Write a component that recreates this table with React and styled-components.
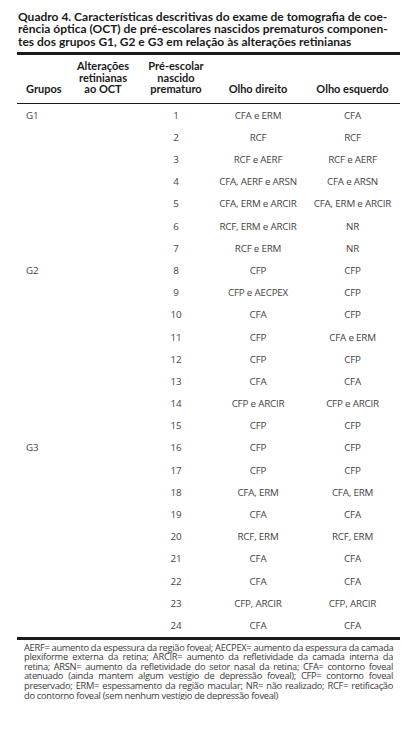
import React from 'react';
import styled, { createGlobalStyle } from 'styled-components';

const GlobalStyle = createGlobalStyle`
  html, body {
    margin: 0;
    padding: 0;
    background: #ffffff;
  }
`;

const Page = styled.div`
  width: 383px;
  padding: 10.75px 0 0 17px;
  color: #1a1a1a;
`;

const Title = styled.h1`
  margin: 0 0 4px 1px;
  font-family: Lato, "Liberation Sans", sans-serif;
  font-weight: 700;
  font-size: 12px;
  line-height: 12.5px;
  color: #1a1a1a;
  white-space: nowrap;
`;

const Rule = styled.div`
  height: ${(p) => p.$h || 3}px;
  background: #1a1a1a;
`;

const Grid = styled.div`
  display: grid;
  grid-template-columns: 48px 76px 70px 94px 95px;
`;

const HeadRow = styled(Grid)`
  padding: 5px 0 8px;
  align-items: end;
`;

const HeadCell = styled.div`
  font-family: Lato, "Liberation Sans", sans-serif;
  font-weight: 700;
  font-size: 11px;
  line-height: 11.5px;
  color: #1a1a1a;
  text-align: ${(p) => (p.$left ? 'left' : 'center')};
  padding-left: ${(p) => (p.$left ? '9px' : '0')};
  white-space: nowrap;
`;

const Row = styled(Grid)`
  height: 22.2px;
  align-items: center;
`;

const Cell = styled.div`
  font-family: "Open Sans", "Liberation Sans", sans-serif;
  font-size: 9.8px;
  line-height: 11px;
  color: #444444;
  text-align: ${(p) => (p.$left ? 'left' : 'center')};
  padding-left: ${(p) => (p.$left ? '9px' : '0')};
  white-space: nowrap;
  letter-spacing: -0.2px;
`;

const Notes = styled.div`
  padding: 3px 7px 0 7px;
  font-family: "Open Sans", "Liberation Sans", sans-serif;
  font-size: 9.3px;
  line-height: 9.6px;
  color: #3a3a3a;
  letter-spacing: -0.3px;
`;

const NoteLine = styled.span`
  display: block;
  white-space: nowrap;
  text-align: justify;
  text-align-last: ${(p) => (p.$last ? 'left' : 'justify')};
`;

const titleLines = [
  'Quadro 4. Características descritivas do exame de tomografia de coe-',
  'rência óptica (OCT) de pré-escolares nascidos prematuros componen-',
  'tes dos grupos G1, G2 e G3 em relação às alterações retinianas',
];

const rows = [
  ['G1', '1', 'CFA e ERM', 'CFA'],
  ['', '2', 'RCF', 'RCF'],
  ['', '3', 'RCF e AERF', 'RCF e AERF'],
  ['', '4', 'CFA, AERF e ARSN', 'CFA e ARSN'],
  ['', '5', 'CFA, ERM e ARCIR', 'CFA, ERM e ARCIR'],
  ['', '6', 'RCF, ERM e ARCIR', 'NR'],
  ['', '7', 'RCF e ERM', 'NR'],
  ['G2', '8', 'CFP', 'CFP'],
  ['', '9', 'CFP e AECPEX', 'CFP'],
  ['', '10', 'CFA', 'CFP'],
  ['', '11', 'CFP', 'CFA e ERM'],
  ['', '12', 'CFP', 'CFP'],
  ['', '13', 'CFA', 'CFA'],
  ['', '14', 'CFP e ARCIR', 'CFP e ARCIR'],
  ['', '15', 'CFP', 'CFP'],
  ['G3', '16', 'CFP', 'CFP'],
  ['', '17', 'CFP', 'CFP'],
  ['', '18', 'CFA, ERM', 'CFA, ERM'],
  ['', '19', 'CFA', 'CFA'],
  ['', '20', 'RCF, ERM', 'RCF, ERM'],
  ['', '21', 'CFA', 'CFA'],
  ['', '22', 'CFA', 'CFA'],
  ['', '23', 'CFP, ARCIR', 'CFP, ARCIR'],
  ['', '24', 'CFA', 'CFA'],
];

const noteLines = [
  'AERF= aumento da espessura da região foveal; AECPEX= aumento da espessura da camada',
  'plexiforme externa da retina; ARCIR= aumento da refletividade da camada interna da',
  'retina; ARSN= aumento da refletividade do setor nasal da retina; CFA= contorno foveal',
  'atenuado (ainda mantem algum vestígio de depressão foveal); CFP= contorno foveal',
  'preservado; ERM= espessamento da região macular; NR= não realizado; RCF= retificação',
  'do contorno foveal (sem nenhum vestígio de depressão foveal)',
];

export default function App() {
  return (
    <>
      <GlobalStyle />
      <Page>
        <Title>
          {titleLines.map((t) => (
            <div key={t}>{t}</div>
          ))}
        </Title>
        <Rule $h={3} />
        <HeadRow>
          <HeadCell $left>Grupos</HeadCell>
          <HeadCell>Alterações<br />retinianas<br />ao OCT</HeadCell>
          <HeadCell>Pré-escolar<br />nascido<br />prematuro</HeadCell>
          <HeadCell>Olho direito</HeadCell>
          <HeadCell>Olho esquerdo</HeadCell>
        </HeadRow>
        <Rule $h={1.3} />
        {rows.map(([g, n, od, oe]) => (
          <Row key={n}>
            <Cell $left>{g}</Cell>
            <Cell />
            <Cell>{n}</Cell>
            <Cell>{od}</Cell>
            <Cell>{oe}</Cell>
          </Row>
        ))}
        <Rule $h={3} />
        <Notes>
          {noteLines.map((l, i) => (
            <NoteLine key={i} $last={i === noteLines.length - 1}>{l}</NoteLine>
          ))}
        </Notes>
      </Page>
    </>
  );
}
